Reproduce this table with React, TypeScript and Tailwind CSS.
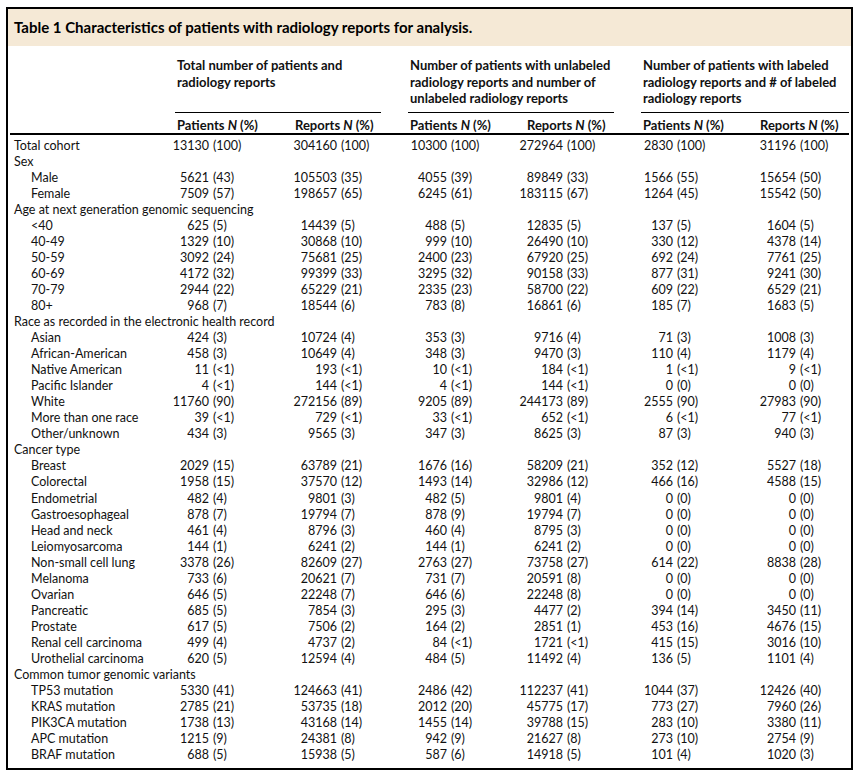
type Row = { label: string; indent?: boolean; section?: boolean; cells?: string[] };

const data: Row[] = [
  { label: "Total cohort", cells: ["13130 (100)", "304160 (100)", "10300 (100)", "272964 (100)", "2830 (100)", "31196 (100)"] },
  { label: "Sex", section: true },
  { label: "Male", indent: true, cells: ["5621 (43)", "105503 (35)", "4055 (39)", "89849 (33)", "1566 (55)", "15654 (50)"] },
  { label: "Female", indent: true, cells: ["7509 (57)", "198657 (65)", "6245 (61)", "183115 (67)", "1264 (45)", "15542 (50)"] },
  { label: "Age at next generation genomic sequencing", section: true },
  { label: "<40", indent: true, cells: ["625 (5)", "14439 (5)", "488 (5)", "12835 (5)", "137 (5)", "1604 (5)"] },
  { label: "40-49", indent: true, cells: ["1329 (10)", "30868 (10)", "999 (10)", "26490 (10)", "330 (12)", "4378 (14)"] },
  { label: "50-59", indent: true, cells: ["3092 (24)", "75681 (25)", "2400 (23)", "67920 (25)", "692 (24)", "7761 (25)"] },
  { label: "60-69", indent: true, cells: ["4172 (32)", "99399 (33)", "3295 (32)", "90158 (33)", "877 (31)", "9241 (30)"] },
  { label: "70-79", indent: true, cells: ["2944 (22)", "65229 (21)", "2335 (23)", "58700 (22)", "609 (22)", "6529 (21)"] },
  { label: "80+", indent: true, cells: ["968 (7)", "18544 (6)", "783 (8)", "16861 (6)", "185 (7)", "1683 (5)"] },
  { label: "Race as recorded in the electronic health record", section: true },
  { label: "Asian", indent: true, cells: ["424 (3)", "10724 (4)", "353 (3)", "9716 (4)", "71 (3)", "1008 (3)"] },
  { label: "African-American", indent: true, cells: ["458 (3)", "10649 (4)", "348 (3)", "9470 (3)", "110 (4)", "1179 (4)"] },
  { label: "Native American", indent: true, cells: ["11 (<1)", "193 (<1)", "10 (<1)", "184 (<1)", "1 (<1)", "9 (<1)"] },
  { label: "Pacific Islander", indent: true, cells: ["4 (<1)", "144 (<1)", "4 (<1)", "144 (<1)", "0 (0)", "0 (0)"] },
  { label: "White", indent: true, cells: ["11760 (90)", "272156 (89)", "9205 (89)", "244173 (89)", "2555 (90)", "27983 (90)"] },
  { label: "More than one race", indent: true, cells: ["39 (<1)", "729 (<1)", "33 (<1)", "652 (<1)", "6 (<1)", "77 (<1)"] },
  { label: "Other/unknown", indent: true, cells: ["434 (3)", "9565 (3)", "347 (3)", "8625 (3)", "87 (3)", "940 (3)"] },
  { label: "Cancer type", section: true },
  { label: "Breast", indent: true, cells: ["2029 (15)", "63789 (21)", "1676 (16)", "58209 (21)", "352 (12)", "5527 (18)"] },
  { label: "Colorectal", indent: true, cells: ["1958 (15)", "37570 (12)", "1493 (14)", "32986 (12)", "466 (16)", "4588 (15)"] },
  { label: "Endometrial", indent: true, cells: ["482 (4)", "9801 (3)", "482 (5)", "9801 (4)", "0 (0)", "0 (0)"] },
  { label: "Gastroesophageal", indent: true, cells: ["878 (7)", "19794 (7)", "878 (9)", "19794 (7)", "0 (0)", "0 (0)"] },
  { label: "Head and neck", indent: true, cells: ["461 (4)", "8796 (3)", "460 (4)", "8795 (3)", "0 (0)", "0 (0)"] },
  { label: "Leiomyosarcoma", indent: true, cells: ["144 (1)", "6241 (2)", "144 (1)", "6241 (2)", "0 (0)", "0 (0)"] },
  { label: "Non-small cell lung", indent: true, cells: ["3378 (26)", "82609 (27)", "2763 (27)", "73758 (27)", "614 (22)", "8838 (28)"] },
  { label: "Melanoma", indent: true, cells: ["733 (6)", "20621 (7)", "731 (7)", "20591 (8)", "0 (0)", "0 (0)"] },
  { label: "Ovarian", indent: true, cells: ["646 (5)", "22248 (7)", "646 (6)", "22248 (8)", "0 (0)", "0 (0)"] },
  { label: "Pancreatic", indent: true, cells: ["685 (5)", "7854 (3)", "295 (3)", "4477 (2)", "394 (14)", "3450 (11)"] },
  { label: "Prostate", indent: true, cells: ["617 (5)", "7506 (2)", "164 (2)", "2851 (1)", "453 (16)", "4676 (15)"] },
  { label: "Renal cell carcinoma", indent: true, cells: ["499 (4)", "4737 (2)", "84 (<1)", "1721 (<1)", "415 (15)", "3016 (10)"] },
  { label: "Urothelial carcinoma", indent: true, cells: ["620 (5)", "12594 (4)", "484 (5)", "11492 (4)", "136 (5)", "1101 (4)"] },
  { label: "Common tumor genomic variants", section: true },
  { label: "TP53 mutation", indent: true, cells: ["5330 (41)", "124663 (41)", "2486 (42)", "112237 (41)", "1044 (37)", "12426 (40)"] },
  { label: "KRAS mutation", indent: true, cells: ["2785 (21)", "53735 (18)", "2012 (20)", "45775 (17)", "773 (27)", "7960 (26)"] },
  { label: "PIK3CA mutation", indent: true, cells: ["1738 (13)", "43168 (14)", "1455 (14)", "39788 (15)", "283 (10)", "3380 (11)"] },
  { label: "APC mutation", indent: true, cells: ["1215 (9)", "24381 (8)", "942 (9)", "21627 (8)", "273 (10)", "2754 (9)"] },
  { label: "BRAF mutation", indent: true, cells: ["688 (5)", "15938 (5)", "587 (6)", "14918 (5)", "101 (4)", "1020 (3)"] },
];

// width of the number part, so the "(" lines up down each column
const numW = ["w-[32px]", "w-[42px]", "w-[37px]", "w-[36px]", "w-[30px]", "w-[36px]"];

const grid = "grid grid-cols-[167px_118px_115px_117px_116px_117px_1fr]";

const Cell = ({ value, col }: { value: string; col: number }) => {
  const [num, pct] = value.split(" ");
  return (
    <div className="flex whitespace-nowrap">
      <span className={`${numW[col]} flex shrink-0 justify-end`}>{num}</span>
      <span className="pl-[4px]">{pct}</span>
    </div>
  );
};

const SubHead = ({ word }: { word: string }) => (
  <div className="whitespace-nowrap font-bold">
    {word} <i>N</i> (%)
  </div>
);

export default function App() {
  return (
    <div className="min-h-screen bg-white pl-[6px] pt-[7px] font-['Lato',sans-serif] text-[#111]">
      <div className="w-[847px] border-2 border-black">
        <div className="flex h-[37px] items-center bg-[#f5e9d6] pl-[6px] text-[15px] font-bold text-black">
          Table 1 Characteristics of patients with radiology reports for analysis.
        </div>

        <div className="px-[2px] pb-[5px] text-[12.5px]">
          {/* column group headings */}
          <div className={`${grid} pt-[11px] text-[13px] font-bold leading-[16.5px]`}>
            <div />
            <div className="col-span-2 -ml-[2px] mr-[29px] border-b border-black pb-[5px] pl-[2px]">
              Total number of patients and
              <br />
              radiology reports
            </div>
            <div className="col-span-2 -ml-[2px] mr-[29px] border-b border-black pb-[5px] pl-[2px]">
              Number of patients with unlabeled
              <br />
              radiology reports and number of
              <br />
              unlabeled radiology reports
            </div>
            <div className="col-span-2 -ml-[2px] border-b border-black pb-[5px] pl-[2px]">
              Number of patients with labeled
              <br />
              radiology reports and # of labeled
              <br />
              radiology reports
            </div>
          </div>

          <div className={`${grid} border-b-2 border-black pt-[4px] text-[13px] leading-[16px]`}>
            <div />
            <SubHead word="Patients" />
            <SubHead word="Reports" />
            <SubHead word="Patients" />
            <SubHead word="Reports" />
            <SubHead word="Patients" />
            <SubHead word="Reports" />
          </div>

          <div className="pt-[3px]">
            {data.map((r) => (
              <div key={r.label} className={`${grid} h-[16.05px] leading-[16px]`}>
                <div className={`whitespace-nowrap ${r.indent ? "pl-[21px]" : "pl-[4px]"} ${r.section ? "col-span-7" : ""}`}>
                  {r.label}
                </div>
                {r.cells?.map((c, i) => <Cell key={i} value={c} col={i} />)}
              </div>
            ))}
          </div>
        </div>
      </div>
    </div>
  );
}
